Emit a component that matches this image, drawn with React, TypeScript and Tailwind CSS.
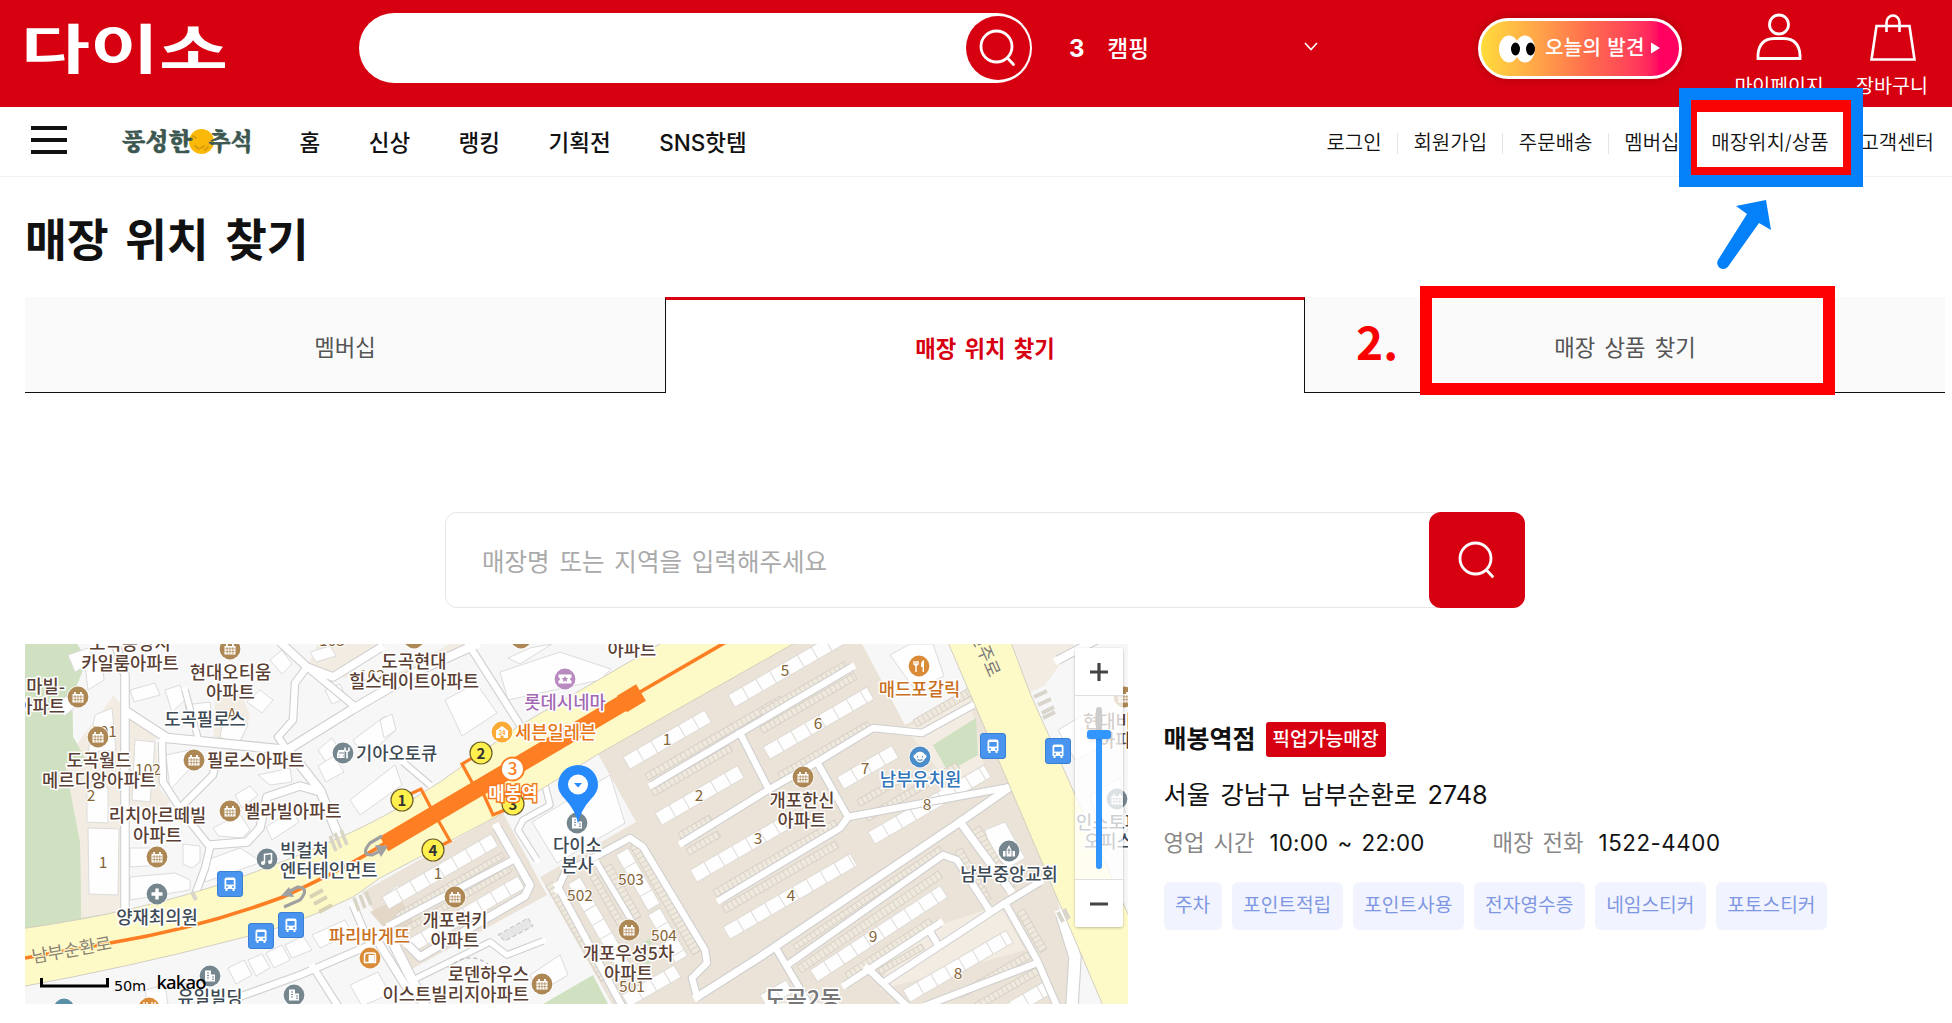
import type { ReactNode } from "react";

type Point = [number, number];

type Label = {
  x: number;
  y: number;
  lines: string[];
  color?: string;
  anchor?: "start" | "middle" | "end";
};

type Strip = {
  x: number;
  y: number;
  len: number;
  angle?: number;
  size?: number;
};

const menus = ["홈", "신상", "랭킹", "기획전", "SNS핫템"];
const services = ["주차", "포인트적립", "포인트사용", "전자영수증", "네임스티커", "포토스티커"];

const BROWN = "#5a4034";
const SLATE = "#3e4a54";

// MAP: roads, each drawn as a grey casing with a white core
const roads: { pts: Point[]; w: number }[] = [
  { w: 7, pts: [[652, 785], [740, 733], [852, 667]] },
  { w: 7, pts: [[740, 733], [768, 788]] },
  { w: 7, pts: [[682, 843], [768, 790], [817, 762], [873, 728], [922, 733], [973, 705]] },
  { w: 7, pts: [[817, 762], [848, 817]] },
  { w: 7, pts: [[720, 900], [840, 828], [848, 817], [1010, 787]] },
  { w: 8, pts: [[697, 997], [760, 957], [960, 822], [1010, 787]] },
  { w: 8, pts: [[960, 822], [993, 867], [1010, 890]] },
  { w: 7, pts: [[790, 963], [943, 855], [957, 860], [988, 908]] },
  { w: 7, pts: [[845, 985], [940, 923]] },
  { w: 7, pts: [[873, 973], [883, 983], [1005, 903], [1040, 882]] },
  { w: 7, pts: [[1005, 903], [1037, 960], [1057, 1006]] },
  { w: 7, pts: [[777, 950], [810, 1006]] },
  { w: 7, pts: [[867, 968], [907, 1006]] },
  { w: 7, pts: [[925, 1006], [1037, 963]] },
  { w: 7, pts: [[929, 930], [938, 945]] },
  { w: 12, pts: [[1062, 915], [1075, 957], [1072, 1006]] },
  { w: 8, pts: [[497, 827], [530, 885], [525, 896], [420, 957], [408, 945]] },
  { w: 7, pts: [[390, 925], [513, 860]] },
  { w: 7, pts: [[557, 890], [565, 873], [630, 838], [643, 847], [705, 950], [707, 963], [692, 978], [697, 997]] },
  { w: 7, pts: [[557, 885], [622, 1006]] },
  { w: 6, pts: [[597, 863], [633, 923]] },
  { w: 6, pts: [[537, 860], [518, 830], [523, 820], [550, 805], [545, 785]] },
  { w: 7, pts: [[467, 642], [520, 725]] },
  { w: 6, pts: [[403, 762], [430, 785]] },
  { w: 6, pts: [[413, 980], [490, 942], [507, 955], [543, 941]] },
  { w: 10, pts: [[387, 930], [425, 1006]] },
  { w: 8, pts: [[115, 642], [125, 675], [125, 912]] },
  { w: 9, pts: [[127, 712], [167, 738], [287, 750], [353, 709], [420, 670], [475, 645]] },
  { w: 7, pts: [[287, 750], [278, 737], [293, 720], [295, 683], [307, 667], [353, 705]] },
  { w: 8, pts: [[280, 642], [307, 667], [333, 677], [380, 648]] },
  { w: 9, pts: [[290, 752], [320, 790], [338, 835]] },
  { w: 7, pts: [[162, 742], [163, 782], [183, 813], [210, 847], [205, 868], [195, 895]] },
  { w: 7, pts: [[217, 757], [213, 775], [180, 808]] },
  { w: 8, pts: [[210, 845], [247, 842], [260, 828], [267, 797], [300, 786], [320, 792]] },
  { w: 6, pts: [[185, 690], [198, 738]] },
  { w: 7, pts: [[225, 1002], [300, 975], [370, 945], [353, 905]] },
  { w: 7, pts: [[313, 967], [338, 1006]] },
  { w: 8, pts: [[377, 940], [408, 990]] },
  { w: 8, pts: [[1058, 660], [1100, 638]] },
];

// MAP: apartment blocks
const blocks: Strip[] = [
  { x: 623, y: 757, len: 94 },
  { x: 655, y: 813, len: 95 },
  { x: 690, y: 870, len: 105 },
  { x: 723, y: 927, len: 147 },
  { x: 728, y: 695, len: 125 },
  { x: 763, y: 747, len: 120 },
  { x: 837, y: 777, len: 63 },
  { x: 868, y: 832, len: 134 },
  { x: 810, y: 970, len: 155, angle: -33 },
  { x: 903, y: 990, len: 119 },
  { x: 382, y: 897, len: 126 },
  { x: 407, y: 940, len: 128 },
  { x: 580, y: 877, len: 105, angle: 60 },
  { x: 628, y: 848, len: 65, angle: 60 },
  { x: 660, y: 908, len: 55, angle: 60 },
  { x: 622, y: 995, len: 60 },
  { x: 760, y: 995, len: 30 },
  { x: 995, y: 1010, len: 60 },
];

// MAP: parking bays
const bays: Strip[] = [
  { x: 645, y: 774, len: 156, size: 7 },
  { x: 651, y: 790, len: 90, size: 7 },
  { x: 678, y: 833, len: 36, size: 7 },
  { x: 686, y: 849, len: 36, size: 7 },
  { x: 713, y: 890, len: 140, size: 8 },
  { x: 722, y: 906, len: 130, size: 8 },
  { x: 760, y: 710, len: 97, size: 7 },
  { x: 760, y: 727, len: 108, size: 7 },
  { x: 778, y: 773, len: 103, size: 7 },
  { x: 857, y: 800, len: 60, size: 7 },
  { x: 865, y: 815, len: 105, size: 7 },
  { x: 793, y: 945, len: 177, size: 6, angle: -34 },
  { x: 797, y: 966, len: 170, size: 8, angle: -34 },
  { x: 845, y: 973, len: 100, size: 7, angle: -33 },
  { x: 878, y: 969, len: 50, size: 6 },
  { x: 958, y: 992, len: 82, size: 7 },
  { x: 975, y: 1003, len: 70, size: 7 },
  { x: 913, y: 720, len: 66, size: 8 },
  { x: 962, y: 848, len: 58, size: 8, angle: 60 },
  { x: 980, y: 826, len: 70, size: 10, angle: 60 },
  { x: 1024, y: 909, len: 46, size: 8, angle: 60 },
  { x: 553, y: 882, len: 110, size: 8, angle: 60 },
  { x: 638, y: 842, len: 125, size: 9, angle: 60 },
  { x: 596, y: 874, len: 60, size: 7, angle: 60 },
  { x: 611, y: 864, len: 60, size: 9, angle: 60 },
  { x: 395, y: 914, len: 123, size: 6 },
  { x: 402, y: 928, len: 123, size: 6 },
];

// MAP: free-standing buildings
const buildings = [
  "135,740 155,742 150,802 132,800",
  "88,828 119,829 118,895 89,894",
  "87,787 108,787 108,823 87,822",
  "95,715 112,708 116,750 88,752",
  "130,848 163,848 163,865 130,867",
  "183,844 200,846 200,862 192,868 183,864",
  "130,877 175,873 190,880 190,890 130,900",
  "207,860 240,848 262,862 205,882",
  "166,755 190,750 196,762 170,790",
  "213,828 240,814 250,830 242,838 218,836",
  "235,795 250,786 258,795 242,808",
  "258,775 290,768 292,782 270,785",
  "266,827 292,810 299,822 272,840",
  "223,720 240,713 248,725 238,745 220,737",
  "353,740 385,716 396,730 365,758",
  "318,750 332,738 342,754 328,765",
  "318,766 334,756 344,772 326,782",
  "350,800 395,765 402,785 360,815",
  "165,690 180,685 185,700 172,712",
  "185,705 210,702 213,725 192,728",
  "247,702 260,690 273,700 262,713",
  "68,655 88,648 95,660 75,672",
  "85,665 102,660 104,680 88,690",
  "60,700 78,690 82,702 64,716",
  "130,690 155,683 160,695 134,702",
  "325,690 340,684 346,698 332,704",
  "270,660 282,650 292,664 282,674",
  "310,652 330,646 336,656 316,662",
  "445,700 476,683 497,713 462,736",
  "500,672 560,652 611,669 600,680 508,700",
  "508,658 530,648 552,644 520,664",
  "380,720 392,714 396,730 384,738",
  "532,822 610,775 625,823 557,863",
  "228,968 244,960 252,975 236,984",
  "248,960 262,954 270,968 256,976",
  "266,953 282,945 290,960 274,968",
  "285,945 303,936 312,950 292,958",
  "312,935 345,920 352,933 320,948",
  "350,985 378,972 390,994 362,1006",
  "145,990 165,985 168,1004 148,1006",
  "180,985 200,980 204,1000 184,1004",
  "385,895 398,885 402,900 390,905",
  "530,975 560,955 568,975 540,992",
  "890,655 910,644 933,644 944,676 915,690",
  "985,830 1005,822 1025,858 1008,868 990,850",
  "1058,730 1088,712 1105,745 1075,760",
  "1090,795 1120,778 1128,830 1105,850",
];

const labels: Label[] = [
  { x: 130, y: 650, lines: ["도곡동양지", "카일룸아파트"], color: BROWN },
  { x: 65, y: 693, lines: ["마빌-", "아파트"], color: BROWN, anchor: "end" },
  { x: 230.5, y: 679, lines: ["현대오티움", "아파트"], color: BROWN },
  { x: 205, y: 726, lines: ["도곡필로스"], color: SLATE },
  { x: 99, y: 767, lines: ["도곡월드", "메르디앙아파트"], color: BROWN },
  { x: 207, y: 767, lines: ["필로스아파트"], color: BROWN, anchor: "start" },
  { x: 356, y: 760, lines: ["기아오토큐"], color: SLATE, anchor: "start" },
  { x: 157.5, y: 822, lines: ["리치아르떼빌", "아파트"], color: BROWN },
  { x: 244, y: 818, lines: ["벨라빌아파트"], color: BROWN, anchor: "start" },
  { x: 280, y: 857, lines: ["빅컬쳐", "엔터테인먼트"], color: SLATE, anchor: "start" },
  { x: 157, y: 924, lines: ["양재최의원"], color: SLATE },
  { x: 369.5, y: 943, lines: ["파리바게뜨"], color: "#c9701e" },
  { x: 210, y: 1004, lines: ["유일빌딩"], color: SLATE },
  { x: 414, y: 668, lines: ["도곡현대", "힐스테이트아파트"], color: BROWN },
  { x: 632, y: 656, lines: ["아파트"], color: BROWN },
  { x: 565, y: 709, lines: ["롯데시네마"], color: "#a267b3" },
  { x: 515, y: 739, lines: ["세븐일레븐"], color: "#e67717", anchor: "start" },
  { x: 577.5, y: 852, lines: ["다이소", "본사"], color: SLATE },
  { x: 455, y: 927, lines: ["개포럭키", "아파트"], color: BROWN },
  { x: 628.5, y: 960, lines: ["개포우성5차", "아파트"], color: BROWN },
  { x: 529, y: 981, lines: ["로덴하우스", "이스트빌리지아파트"], color: BROWN, anchor: "end" },
  { x: 802, y: 807, lines: ["개포한신", "아파트"], color: BROWN },
  { x: 919.5, y: 696, lines: ["매드포갈릭"], color: "#c9701e" },
  { x: 920.5, y: 786, lines: ["남부유치원"], color: "#2f74b8" },
  { x: 1009, y: 881, lines: ["남부중앙교회"], color: SLATE },
  { x: 1083, y: 728, lines: ["현대비전"], color: BROWN, anchor: "start" },
  { x: 1099, y: 747, lines: ["아파트"], color: BROWN, anchor: "start" },
  { x: 1076, y: 829, lines: ["인스토피아"], color: SLATE, anchor: "start" },
  { x: 1084, y: 848, lines: ["오피스텔"], color: SLATE, anchor: "start" },
];

const numbers: [string, number, number][] = [
  ["103", 332, 646],
  ["A", 232, 720],
  ["102", 372, 681],
  ["101", 104, 737],
  ["102", 148, 775],
  ["2", 91, 801],
  ["1", 103, 868],
  ["1", 438, 879],
  ["1", 667, 745],
  ["2", 699, 801],
  ["3", 758, 844],
  ["4", 791, 901],
  ["5", 785, 676],
  ["6", 818, 729],
  ["7", 865, 774],
  ["8", 927, 810],
  ["9", 873, 942],
  ["8", 958, 979],
  ["502", 580, 901],
  ["503", 631, 885],
  ["504", 664, 941],
  ["501", 632, 992],
];

const apartments: Point[] = [
  [230, 649], [78, 697], [98, 737], [194, 760], [230, 811], [157, 857],
  [414, 638], [521, 638], [455, 897], [629, 930], [542, 984], [803, 777], [1124, 697],
];

const busStops: Point[] = [[230, 884], [261, 936], [291, 925], [993, 746], [1058, 751]];

const exits: [string, number, number][] = [
  ["1", 402, 800],
  ["2", 481, 753],
  ["3", 513, 804],
  ["4", 433, 850],
];

function StripShape({ x, y, len, angle = -30, size = 14, bay }: Strip & { bay?: boolean }) {
  const step = bay ? 5 : 16;
  const count = Math.floor(len / step);
  return (
    <g transform={`translate(${x} ${y}) rotate(${angle})`} stroke={bay ? "#d3cdc3" : "#dedbd6"} strokeWidth={bay ? 0.8 : 1}>
      <rect width={len} height={size} fill={bay ? "#efe9dd" : "#fefefe"} />
      {Array.from({ length: count }, (_, i) => (
        <path key={i} d={`M${(i + 1) * step} 0v${size}`} />
      ))}
    </g>
  );
}

function Poi({ x, y, color, children }: { x: number; y: number; color: string; children?: ReactNode }) {
  return (
    <g transform={`translate(${x} ${y})`}>
      <circle r="11.2" fill="#fff" opacity="0.7" />
      <circle r="10.4" fill={color} />
      {children}
    </g>
  );
}

function ApartmentGlyph({ color }: { color: string }) {
  return (
    <g>
      <path d="M-5.5 5.5V-3h1.6v-2h1.8v2h4.2v-2h1.8v2h1.6v8.5z" fill="#fff" />
      <path d="M-2.8 -2v7M0 -2v7M2.8 -2v7M-5 -.2H5M-5 2.6H5" stroke={color} strokeWidth="0.7" />
    </g>
  );
}

function OfficeGlyph() {
  return (
    <g>
      <path d="M-5 5.5v-11h6v4h4v7z" fill="#fff" />
      <path d="M-3 -3h2M-3 -.5h2M-3 2h2M2 1h2M2 3.2h2" stroke="#76868f" strokeWidth="1.1" />
    </g>
  );
}

function MapCanvas() {
  const path = (pts: Point[]) => pts.map((p) => p.join(",")).join(" ");
  return (
    <svg
      width="1103"
      height="360"
      viewBox="25 644 1103 360"
      className="block font-[family-name:'Noto_Sans_CJK_KR','Noto_Sans_CJK_SC',sans-serif]">
      <rect x="25" y="644" width="1103" height="360" fill="#f7f7f8" />

      {/* parks and housing estates */}
      <path d="M25 644H77L87 660 72 697 73 737 88 763 105 843 106 918 25 930z" fill="#d0e1c1" />
      <path d="M113 697L95 720 63 763 80 843 81 918 121 912 122 710z" fill="#f2ece2" />
      <path d="M25 644H77L87 660 72 697 73 737 88 763 65 763 80 843 81 918 25 930z" fill="#d0e1c1" />
      <path d="M113 695L95 735 88 763 105 843 106 918 122 914V705z" fill="#f2ece2" />
      <path d="M130 715L155 735 160 790 170 800 165 810 130 805z" fill="#f2ece2" />
      <path d="M215 700L240 690 250 715 240 750 213 745z" fill="#f2ece2" />
      <path d="M318 644H385L345 678 308 664z" fill="#f2ece2" />
      <path d="M385 680L450 644H475L400 685z" fill="#f2ece2" />
      <path d="M598 754L793 640H860L905 725 972 692 1011 787 1056 893 1066 940 1072 1004H612L540 877 636 822z" fill="#ebe3d7" />
      <path d="M362 892L503 813 547 895 410 970z" fill="#ebe3d7" />
      <path d="M370 912L400 897 415 925 395 940z" fill="#e3d8c8" />
      <path d="M895 940L1000 905 1025 950 880 990z" fill="#f2ece2" />
      <path d="M905 728L970 698 985 770 950 785z" fill="#f2ece2" />
      <path d="M1012 644H1075L1045 685 1030 693z" fill="#f2ece2" />
      <path d="M593 975L543 1004H608z" fill="#d0e1c1" />
      <path d="M640 945L650 938 655 960 645 965z" fill="#d0e1c1" />
      <path d="M933 745L976 718 978 755 948 772z" fill="#d0e1c1" />

      {buildings.map((points) => (
        <polygon key={points} points={points} fill="#fefefe" stroke="#dcdcdc" />
      ))}
      {bays.map((s) => (
        <StripShape key={`${s.x}-${s.y}`} {...s} bay />
      ))}
      {blocks.map((s) => (
        <StripShape key={`${s.x}-${s.y}`} {...s} />
      ))}

      <g fill="none" stroke="#cfcfcf" strokeLinejoin="round">
        {roads.map((r, i) => (
          <polyline key={i} points={path(r.pts)} strokeWidth={r.w + 1.6} />
        ))}
      </g>
      <g fill="none" stroke="#fff" strokeLinejoin="round" strokeLinecap="square">
        {roads.map((r, i) => (
          <polyline key={i} points={path(r.pts)} strokeWidth={r.w - 0.6} />
        ))}
      </g>
      <path d="M498 935L528 918 533 926 505 941z" fill="#e6e6e6" stroke="#bbb" strokeDasharray="4 3" />
      <path d="M448 968q20 -18 40 -4" fill="none" stroke="#c4c4c4" strokeWidth="1.5" strokeDasharray="4 3" />

      {/* main avenues */}
      <path
        d="M20 929Q140 912 230 881Q340 842 400 807L440 782 517 727 667 640H800L600 753 503 813 380 878 353 897Q290 928 233 940Q130 967 20 987z"
        fill="#fefac8"
        stroke="#d2cfc0"
      />
      <path d="M947 640L1010 787 1055 893 1104 1008H1135V930L1030 693 1010 640z" fill="#fefac8" stroke="#d2cfc0" />
      <path d="M1034 697l13 -6M1038 705l13 -6M1042 713l12 -6M1043 718l12 -6" stroke="#d9d5cd" strokeWidth="4" />
      <path d="M330 836l6 15M335 833l6 15M341 830l6 15M354 898l5 13M360 895l5 13M366 892l5 13" stroke="#d9d5c6" strokeWidth="3.5" />
      <path d="M310 897l13 -7M314 904l13 -7M319 912l13 -7" stroke="#d9d2b4" strokeWidth="4" />
      <path d="M192 892l4 8M1058 912l5 10M1064 909l5 10" stroke="#d9d5cd" strokeWidth="4" />

      {/* subway line 3 */}
      <path d="M25 958L110 943Q200 928 283 897Q350 866 385 843" fill="none" stroke="#fd7e23" strokeWidth="3.6" />
      <path d="M640 692L726 642" stroke="#fd7e23" strokeWidth="3.6" />
      <path d="M384 844L635 696" stroke="#fd7e23" strokeWidth="17" />
      <path d="M622 704L641 692.500" stroke="#fd7e23" strokeWidth="19" />
      <g fill="none" stroke="#fd7e23" strokeWidth="3.2">
        <path d="M408 795L421 789 432 810" />
        <path d="M472 758L462 764 473 784" />
        <path d="M483 793L493 815 507 809" />
        <path d="M438 820L450 841 440 846" />
      </g>
      <g fill="none" stroke="#a0a0a0" strokeWidth="3.2">
        <path d="M382 836L370 843Q360 855 372 855L380 851" />
        <path d="M284 907L300 900Q310 888 298 887L288 892" />
      </g>
      <path d="M388 846l-13 -1 6 12zM281 896l8 -9 5 10z" fill="#a0a0a0" />

      {/* building numbers */}
      <g fontSize="15.500" textAnchor="middle" fill="#856437" stroke="#fff" strokeWidth="2" paintOrder="stroke">
        {numbers.map(([text, x, y]) => (
          <text key={`${x}-${y}`} x={x} y={y}>
            {text}
          </text>
        ))}
      </g>

      {/* points of interest */}
      {apartments.map(([x, y]) => (
        <Poi key={`${x}-${y}`} x={x} y={y} color="#ad8754">
          <ApartmentGlyph color="#ad8754" />
        </Poi>
      ))}
      <Poi x={343} y={753} color="#76868f">
        <path d="M-6 5V1l1.500 -4H1.500V5z" fill="#fff" />
        <path d="M4 5.500V-1M2 -5.500v3q2 2 4 0v-3" fill="none" stroke="#fff" strokeWidth="1.600" />
        <path d="M-4 0H1M-4.500 3h1M0 3h1" stroke="#76868f" />
      </Poi>
      <Poi x={267} y={859} color="#76868f">
        <path d="M-2.500 4V-4.500L4.500 -5.500V3" fill="none" stroke="#fff" strokeWidth="1.500" />
        <circle cx="-4" cy="4" r="2" fill="#fff" />
        <circle cx="3" cy="3" r="2" fill="#fff" />
      </Poi>
      <Poi x={157} y={894} color="#76868f">
        <path d="M-5.500 0H5.500M0 -5.500V5.500" stroke="#fff" strokeWidth="3.400" />
      </Poi>
      <Poi x={210} y={976} color="#76868f">
        <OfficeGlyph />
      </Poi>
      <Poi x={294} y={995} color="#76868f">
        <OfficeGlyph />
      </Poi>
      <Poi x={577} y={823} color="#76868f">
        <OfficeGlyph />
      </Poi>
      <Poi x={1117} y={799} color="#76868f">
        <ApartmentGlyph color="#76868f" />
      </Poi>
      <Poi x={1009} y={851} color="#76868f">
        <path d="M-6 5.500V0h2.500v5.500zM3.500 5.500V0H6v5.500zM-2.500 5.500V-1L0 -6 2.500 -1v6.500z" fill="#fff" />
        <path d="M0 -2.500V3M-1.500 -.8h3" stroke="#76868f" />
      </Poi>
      <Poi x={370} y={958} color="#d98b38">
        <path d="M-5.500 4.500V-2q0 -3 3 -3H3q3 0 2.500 3V4.500z" fill="none" stroke="#fff" strokeWidth="1.500" />
        <path d="M-1.500 -3H4.500V4.500H-1.500z" fill="#fff" />
      </Poi>
      <Poi x={919} y={666} color="#d98b38">
        <path d="M-5 -5v3q2 2.500 4 0v-3M-3 -5V6" fill="none" stroke="#fff" strokeWidth="1.400" />
        <path d="M5 -6V6H3.600V1H2q-.5 -6 3 -7z" fill="#fff" />
      </Poi>
      <Poi x={149} y={1008} color="#d98b38">
        <path d="M-5 -6v4M-2 -6v4M3 -6v4M6 -6v4" stroke="#fff" strokeWidth="1.400" />
      </Poi>
      <Poi x={64} y={1009} color="#5b8fa8" />
      <Poi x={565} y={679} color="#b98abf">
        <path d="M-6.500 -4.500h13v3a1.500 1.500 0 0 0 0 3v3h-13v-3a1.500 1.500 0 0 0 0 -3z" fill="#fff" />
        <path d="M0 -3.200l1 2.200 2.300 .2 -1.700 1.500 .5 2.300 -2.100 -1.200 -2.100 1.200 .5 -2.300 -1.700 -1.500 2.300 -.2z" fill="#b98abf" />
      </Poi>
      <Poi x={502} y={732} color="#fbaa35">
        <path d="M-6 6V-1.500L0 -6 6 -1.500V6H1.500V3.500h-3V6z" fill="#fff" />
        <text y="2.600" fontSize="6" fontWeight="700" textAnchor="middle" fill="#fbaa35">24</text>
      </Poi>
      <Poi x={920} y={757} color="#4a8dca">
        <path d="M-6.500 -.5q0 -2 1.500 -2Q-3.500 -5 0 -5.500 3.500 -5 5 -2.500q1.500 0 1.500 2 0 1.700 -1.500 2Q3 5.500 0 5.500T-5 1.500q-1.500 -.3 -1.500 -2z" fill="#fff" />
        <path d="M-2.500 -1v1.500M2.500 -1v1.500M-2.500 2.500q2.500 1.500 5 0" stroke="#4a8dca" strokeWidth="1.200" fill="none" />
      </Poi>

      {busStops.map(([x, y]) => (
        <g key={`${x}-${y}`} transform={`translate(${x} ${y})`}>
          <rect x="-12.500" y="-12.500" width="25" height="25" rx="2.500" fill="#4894ee" stroke="#3a7fd4" />
          <path d="M-5.500 5V-4.500q0 -2 2 -2h7q2 0 2 2V5zM-4.500 5v2h2V5zM2.500 5v2h2V5z" fill="#fff" />
          <path d="M-3.700 -4h7.400v4.600h-7.400z" fill="#4894ee" />
          <circle cx="-3" cy="3" r="1" fill="#4894ee" />
          <circle cx="3" cy="3" r="1" fill="#4894ee" />
        </g>
      ))}

      {exits.map(([text, x, y]) => (
        <g key={text}>
          <circle cx={x} cy={y} r="11" fill="#fff04e" stroke="#6f5f2a" strokeWidth="1.200" />
          <text x={x} y={y + 5.5} fontSize="15" fontWeight="700" textAnchor="middle" fill="#333">
            {text}
          </text>
        </g>
      ))}

      <g fontSize="17.700" fontWeight="500" strokeWidth="3.200" paintOrder="stroke" strokeLinejoin="round" stroke="#fff">
        {labels.map((l) => (
          <text key={`${l.x}-${l.y}`} textAnchor={l.anchor ?? "middle"} fill={l.color}>
            {l.lines.map((line, i) => (
              <tspan key={line} x={l.x} y={l.y + i * 19.5}>
                {line}
              </tspan>
            ))}
          </text>
        ))}
      </g>
      <text x="33" y="963" fontSize="17.500" fill="#8b8474" stroke="#fefac8" strokeWidth="2" paintOrder="stroke" transform="rotate(-10 33 963)">
        남부순환로
      </text>
      <text x="970" y="634" fontSize="17.500" fill="#777" transform="rotate(66 970 634)">
        언주로
      </text>
      <text x="803" y="1007" fontSize="23" fontWeight="500" textAnchor="middle" fill="#777" stroke="#fff" strokeWidth="3" paintOrder="stroke">
        도곡2동
      </text>

      {/* station badge */}
      <circle cx="512.500" cy="769" r="11.500" fill="#fff" stroke="#fd7e23" strokeWidth="1.800" />
      <text x="512.500" y="775" fontSize="17" fontWeight="500" textAnchor="middle" fill="#fd7e23">3</text>
      <text x="513" y="800" fontSize="18" fontWeight="700" textAnchor="middle" fill="#fff" stroke="#f47a20" strokeWidth="3" paintOrder="stroke">
        매봉역
      </text>

      {/* selected store pin */}
      <path d="M578 824Q576 811 565 799Q558 792 558 785A20 20 0 0 1 598 785Q598 792 591 799Q580 811 578 824z" fill="#268afb" />
      <circle cx="578" cy="784.500" r="10" fill="#fff" />
      <path d="M574 783h8l-4 4.500z" fill="#268afb" />

      {/* scale */}
      <path d="M41.500 978V986H107.500V978" fill="none" stroke="#000" strokeWidth="3" />
      <text x="114" y="991" fontSize="14.500" className="font-[family-name:'DejaVu_Sans','Noto_Sans',sans-serif]" textLength="32">50m</text>
      <text x="156.500" y="989" fontSize="18.500" fontWeight="500" className="font-[family-name:'Noto_Sans',sans-serif]" textLength="50">kakao</text>
    </svg>
  );
}

function ZoomControl() {
  return (
    <div className="absolute top-1 right-[5px] flex h-[279px] w-12 flex-col overflow-hidden rounded-[3px] shadow-[0_1px_3px_rgba(0,0,0,0.25)]">
      <button className="flex h-12 items-center justify-center border-b border-[#e0e0e0] bg-white">
        <svg width="18" height="18" stroke="#444" strokeWidth="3.200">
          <path d="M0 9H18M9 0V18" />
        </svg>
      </button>
      <div className="flex flex-1 justify-center bg-white/75 pt-[11px]">
        <div className="relative h-[162px] w-1.5 rounded-full bg-[#ccc]">
          <div className="absolute bottom-0 h-[135px] w-1.5 rounded-b-full bg-[#3396ff]" />
          <div className="absolute top-[23px] -left-[9px] h-[9px] w-6 rounded-[3px] bg-[#3396ff] shadow" />
        </div>
      </div>
      <button className="flex h-12 items-center justify-center border-t border-[#e0e0e0] bg-white">
        <svg width="18" height="18" stroke="#444" strokeWidth="3.200">
          <path d="M0 9H18" />
        </svg>
      </button>
    </div>
  );
}

function SearchIcon() {
  return (
    <svg width="38" height="38" viewBox="0 0 38 38" fill="none" stroke="#fff" strokeWidth="2.800" strokeLinecap="round">
      <circle cx="17.500" cy="17.500" r="15.500" />
      <path d="M28.500 29L34.500 35.500" />
    </svg>
  );
}

function Header() {
  return (
    <header className="flex h-[107px] items-start bg-[#d70011] pl-[25px] text-white">
      <svg width="200" height="60" className="mt-[18px] overflow-visible" aria-label="다이소">
        <text
          x="-4"
          y="50.500"
          fontSize="53"
          fontWeight="700"
          fill="#fff"
          textLength="207"
          lengthAdjust="spacingAndGlyphs"
          className="font-[family-name:'Noto_Sans_CJK_KR',sans-serif]">
          다이소
        </text>
      </svg>

      <div className="mt-[13px] ml-[134px] flex h-[70px] w-[673px] items-center justify-end rounded-full bg-white pr-[2.5px]">
        <button className="flex size-16 items-center justify-center rounded-full bg-[#d70011]">
          <SearchIcon />
        </button>
      </div>

      <div className="mt-[13px] ml-[37px] flex h-[70px] w-[249px] items-center">
        <span className="pt-0.5 text-2xl font-bold">3</span>
        <span className="ml-[23px] pt-0.5 text-[22.5px] font-medium">캠핑</span>
        <svg width="14" height="9" className="-mt-1 ml-auto" fill="none" stroke="#fff" strokeWidth="1.600">
          <path d="M1 1L7 7.500 13 1" />
        </svg>
      </div>

      <div className="mt-[18px] ml-[160px] flex h-[61px] w-[204px] items-center rounded-full border-3 border-white bg-linear-to-r from-[#ffdc3a] via-[#ff6a4d] via-55% to-[#ff0060] to-90% pl-[18px] shadow-[0_0_8px_rgba(90,0,0,0.35)]">
        <svg width="37" height="28" viewBox="0 0 37 28">
          <ellipse cx="10" cy="14" rx="10" ry="13.500" fill="#fff" />
          <ellipse cx="26" cy="14" rx="10" ry="13.500" fill="#fff" />
          <ellipse cx="16.500" cy="14" rx="4.500" ry="6.500" fill="#000" />
          <ellipse cx="31.500" cy="14" rx="4.500" ry="6.500" fill="#000" />
        </svg>
        <span className="ml-[9px] pb-0.5 text-[20px] font-medium tracking-[0.4px] whitespace-nowrap">오늘의 발견</span>
        <svg width="9" height="12" className="-mt-0.5 ml-1.5" fill="#fff">
          <path d="M0 0.500L9 6 0 11.500z" />
        </svg>
      </div>

      <a className="mt-[13px] ml-[52px] flex w-[90px] flex-col items-center">
        <svg width="46" height="48" fill="none" stroke="#fff" strokeWidth="2.800">
          <circle cx="23" cy="11.500" r="9.500" />
          <path d="M2 45.500V42Q3 26 18 25.500H28Q43 26 44 42V45.500z" />
        </svg>
        <span className="mt-[11px] text-[19.5px] leading-7 tracking-[-0.1px] whitespace-nowrap">마이페이지</span>
      </a>
      <a className="mt-[13px] ml-[30px] flex w-[76px] flex-col items-center">
        <svg width="48" height="48" fill="none" stroke="#fff" strokeWidth="2.600">
          <path d="M8.500 13H41.500L46.500 46.500H3.500z" />
          <path d="M18.500 19V9.500a6.500 7 0 0 1 13 0V19" />
        </svg>
        <span className="mt-[11px] text-[19.5px] leading-7 whitespace-nowrap">장바구니</span>
      </a>
    </header>
  );
}

function Divider() {
  return <span className="h-[21px] w-px bg-[#e5e5e5]" />;
}

function Nav() {
  return (
    <nav className="flex h-[70px] items-center border-b border-[#f2f2f2] pr-[18px] pl-[31px] text-[#111]">
      <div className="mb-[3px] flex w-9 flex-col gap-2">
        <span className="h-1 bg-[#111]" />
        <span className="h-1 bg-[#111]" />
        <span className="h-1 bg-[#111]" />
      </div>

      <svg width="132" height="32" viewBox="0 0 132 32" className="ml-[54px] overflow-visible">
        <circle cx="80.500" cy="15.500" r="12.500" fill="#fab908" />
        <path d="M72 10l3 2M74 20l4 3M80 22l3 -2M84 24l3 -3" stroke="#d99a10" strokeWidth="2" strokeLinecap="round" />
        <g
          fontSize="24"
          fontWeight="900"
          fill="#3c5750"
          stroke="#3c5750"
          strokeWidth="0.600"
          className="font-[family-name:'Noto_Serif_CJK_KR','Noto_Sans_CJK_KR',serif]">
          <text x="1" y="24" textLength="70" lengthAdjust="spacingAndGlyphs">풍성한</text>
          <text x="87.500" y="24" textLength="44" lengthAdjust="spacingAndGlyphs">추석</text>
        </g>
      </svg>

      <ul className="mt-0.5 ml-[46.5px] flex gap-[48.5px] text-[22.5px] font-medium">
        {menus.map((menu) => (
          <li key={menu}>{menu}</li>
        ))}
      </ul>

      <ul className="mt-[3px] ml-auto flex items-center text-[20px] font-[350]">
        <li className="pr-[15.5px]">로그인</li>
        <Divider />
        <li className="px-[15.4px]">회원가입</li>
        <Divider />
        <li className="px-[15.4px]">주문배송</li>
        <Divider />
        <li className="px-[15.4px]">멤버십</li>
        <Divider />
        <li className="px-[15.4px]">매장위치/상품</li>
        <Divider />
        <li className="pl-[15.4px]">고객센터</li>
      </ul>
    </nav>
  );
}

function StoreInfo() {
  return (
    <section className="flex flex-1 flex-col pt-[77px] pl-[35.5px] text-[#111]">
      <div className="flex items-center">
        <h2 className="text-[25px] font-bold">매봉역점</h2>
        <span className="ml-[10px] flex h-[35px] w-30 items-center justify-center rounded-[3px] bg-[#d70011] text-[19.3px] font-medium text-white">
          픽업가능매장
        </span>
      </div>
      <p className="mt-[18px] text-[25.3px] leading-9 font-normal [word-spacing:0.13em]">서울 강남구 남부순환로 2748</p>
      <dl className="mt-3 flex text-[22.3px] leading-9 font-normal [word-spacing:0.12em]">
        <dt className="text-[#888]">영업 시간</dt>
        <dd className="ml-[15px] w-[223px] tracking-[0.01em]">10:00 ~ 22:00</dd>
        <dt className="text-[#888]">매장 전화</dt>
        <dd className="ml-[15px] tracking-[0.025em]">1522-4400</dd>
      </dl>
      <ul className="mt-[21px] flex gap-2.5">
        {services.map((service) => (
          <li
            key={service}
            className="flex h-12 items-center rounded-md bg-[#f1f4fe] px-[11.4px] text-[19.2px] font-normal text-[#7f97e2]">
            {service}
          </li>
        ))}
      </ul>
    </section>
  );
}

export default function App() {
  return (
    <div className="relative h-[1023px] w-[1952px] overflow-hidden bg-white font-[family-name:Inter,'Noto_Sans_CJK_KR',sans-serif]">
      <Header />
      <Nav />

      <main className="px-[25px]">
        <h1 className="mt-[32px] text-[45.5px] leading-[64px] font-bold text-[#111] [word-spacing:0.12em]">매장 위치 찾기</h1>

        {/* TABS */}
        <div className="mt-6 flex h-24 w-[1920px] text-[22.3px] [word-spacing:0.13em]">
          <div className="flex w-[640px] items-center justify-center border-b border-[#111] bg-[#fafafa] pt-1.5 font-normal text-[#555]">
            멤버십
          </div>
          <div className="flex w-[640px] items-center justify-center border-x border-t-3 border-x-[#111] border-t-[#d70011] bg-white pt-1 font-bold text-[#d70011]">
            매장 위치 찾기
          </div>
          <div className="flex w-[640px] items-center justify-center border-b border-[#111] bg-[#fafafa] pt-1.5 font-normal text-[#555]">
            매장 상품 찾기
          </div>
        </div>

        {/* STORE SEARCH */}
        <div className="mt-[119px] ml-[420px] flex h-24 w-[1080px] rounded-xl border border-[#e8e8e8]">
          <div className="flex flex-1 items-center pt-1 pl-[36px] text-[24.5px] font-normal text-[#aaa] [word-spacing:0.12em]">
            매장명 또는 지역을 입력해주세요
          </div>
          <button className="-m-px flex w-24 items-center justify-center rounded-xl bg-[#d70011]">
            <SearchIcon />
          </button>
        </div>

        <div className="mt-9 flex h-[360px]">
          <div className="relative w-[1103px] overflow-hidden">
            <MapCanvas />
            <ZoomControl />
          </div>
          <StoreInfo />
        </div>
      </main>

      {/* GUIDE MARKS */}
      <div className="absolute top-[88px] left-[1679px] h-[99px] w-[184px] border-12 border-[#0480f8]">
        <div className="h-full border-t-12 border-r-8 border-b-8 border-l-6 border-[#f80404]" />
      </div>
      <svg width="60" height="74" viewBox="0 0 60 74" className="absolute top-[198px] left-[1714px]" fill="#0480f8">
        <path d="M52 2L22 8 33 16 4 62a5.800 5.800 0 0 0 10.500 6L45 25 57 32z" />
      </svg>
      <span className="absolute top-[305px] left-[1356px] font-[family-name:'Noto_Sans_CJK_KR',sans-serif] text-[46px] leading-[70px] font-bold text-[#fa0000]">
        2.
      </span>
      <div className="absolute top-[286px] left-[1420px] h-[109px] w-[415px] border-12 border-[#fe0000]" />
    </div>
  );
}
